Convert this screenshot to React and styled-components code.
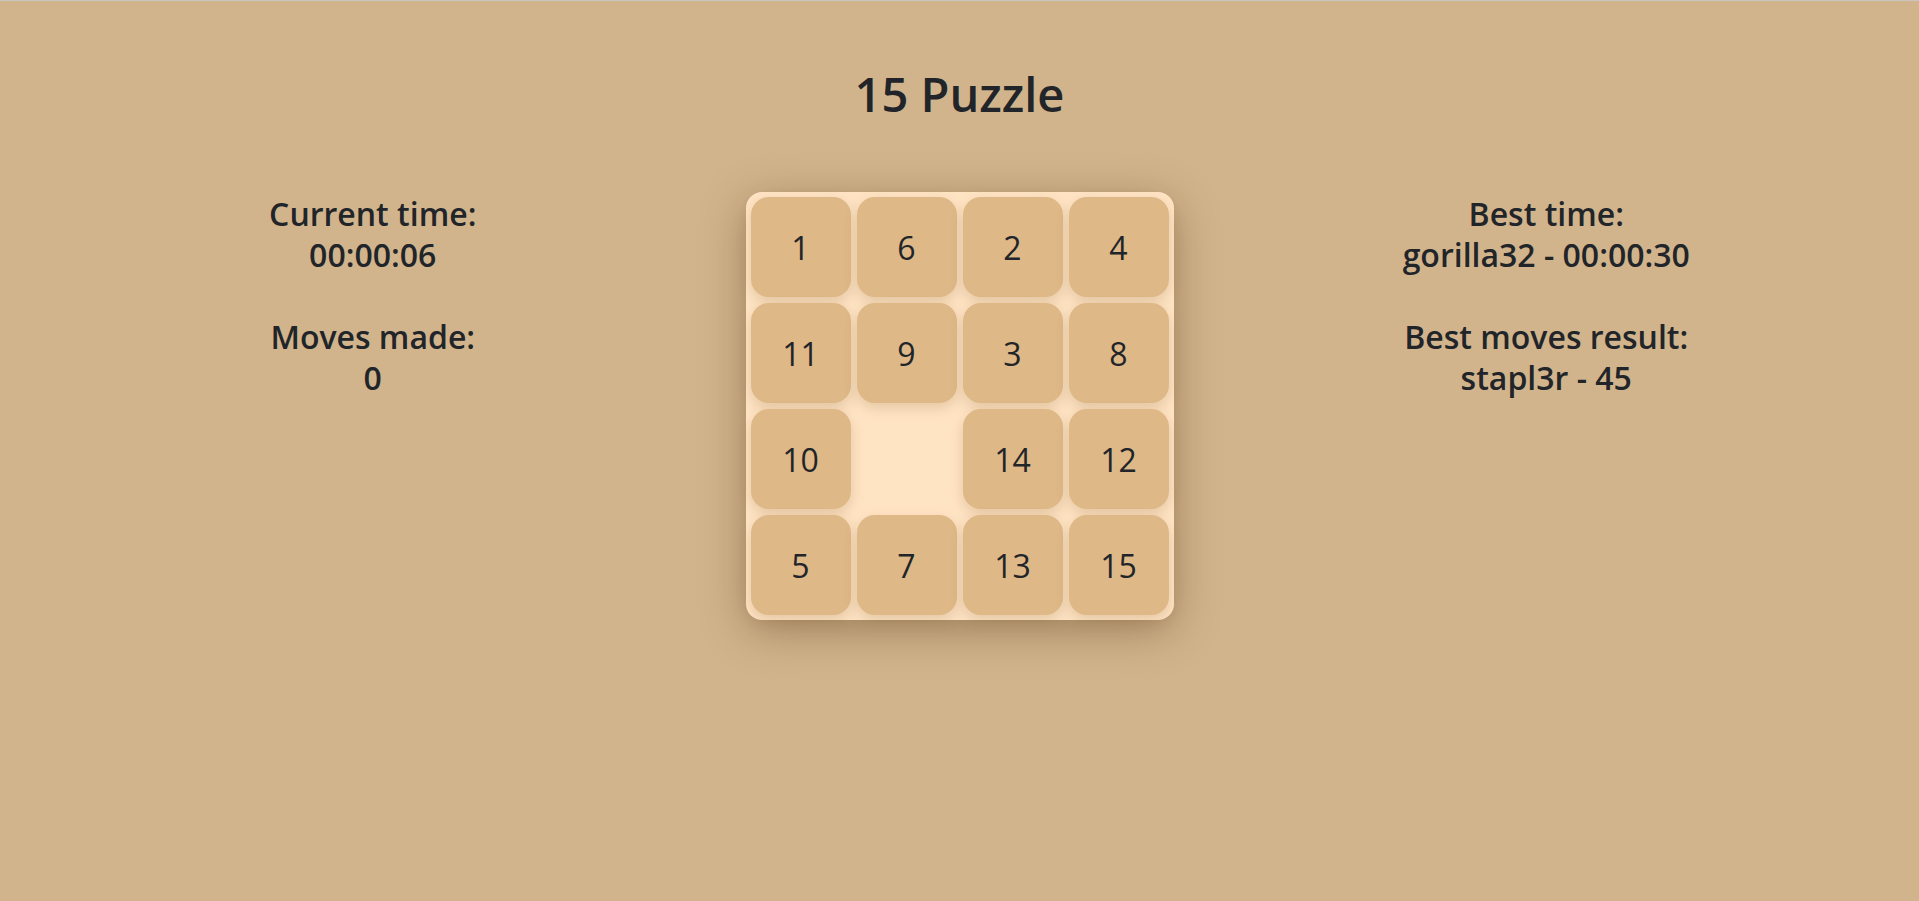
import React from "react";
import styled, { createGlobalStyle } from "styled-components";

const GlobalStyle = createGlobalStyle`
  html, body {
    margin: 0;
    padding: 0;
    background: #d2b48c;
  }
  body {
    font-family: "Open Sans", "Noto Sans", sans-serif;
    color: #212529;
    border-top: 1px solid #c9c5bf;
  }
`;

const Page = styled.div`
  min-height: 900px;
  display: flex;
  flex-direction: column;
  align-items: stretch;
`;

const Title = styled.h1`
  margin: 65px 0 0;
  text-align: center;
  font-size: 47px;
  font-weight: 600;
  line-height: 56px;
`;

const Row = styled.div`
  display: flex;
  align-items: flex-start;
  margin-top: 70px;
`;

const Side = styled.div`
  flex: 1;
  text-align: center;
  font-size: 32px;
  font-weight: 600;
  line-height: 41px;
  padding-top: 1px;
`;

const Stat = styled.div`
  & + & {
    margin-top: 41px;
  }
`;

const Board = styled.div`
  width: 428px;
  box-sizing: border-box;
  padding: 2px;
  display: grid;
  grid-template-columns: repeat(4, 106px);
  background: #ffe4c4;
  border-radius: 16px;
  box-shadow: 0 10px 45px rgba(70, 45, 15, 0.38);
`;

const Tile = styled.div`
  width: 100px;
  height: 100px;
  margin: 3px;
  border-radius: 18px;
  display: flex;
  align-items: center;
  justify-content: center;
  font-size: 32px;
  font-weight: 400;
  background: ${(p) => (p.$empty ? "transparent" : "#deb887")};
  box-shadow: ${(p) => (p.$empty ? "none" : "0 5px 14px rgba(120, 80, 30, 0.2)")};
`;

const tiles = [1, 6, 2, 4, 11, 9, 3, 8, 10, 0, 14, 12, 5, 7, 13, 15];

export default function App() {
  return (
    <Page>
      <GlobalStyle />
      <Title>15 Puzzle</Title>
      <Row>
        <Side>
          <Stat>
            <div>Current time:</div>
            <div>00:00:06</div>
          </Stat>
          <Stat>
            <div>Moves made:</div>
            <div>0</div>
          </Stat>
        </Side>
        <Board>
          {tiles.map((t) => (
            <Tile key={t} $empty={t === 0}>
              {t === 0 ? "" : t}
            </Tile>
          ))}
        </Board>
        <Side>
          <Stat>
            <div>Best time:</div>
            <div>gorilla32 - 00:00:30</div>
          </Stat>
          <Stat>
            <div>Best moves result:</div>
            <div>stapl3r - 45</div>
          </Stat>
        </Side>
      </Row>
    </Page>
  );
}
